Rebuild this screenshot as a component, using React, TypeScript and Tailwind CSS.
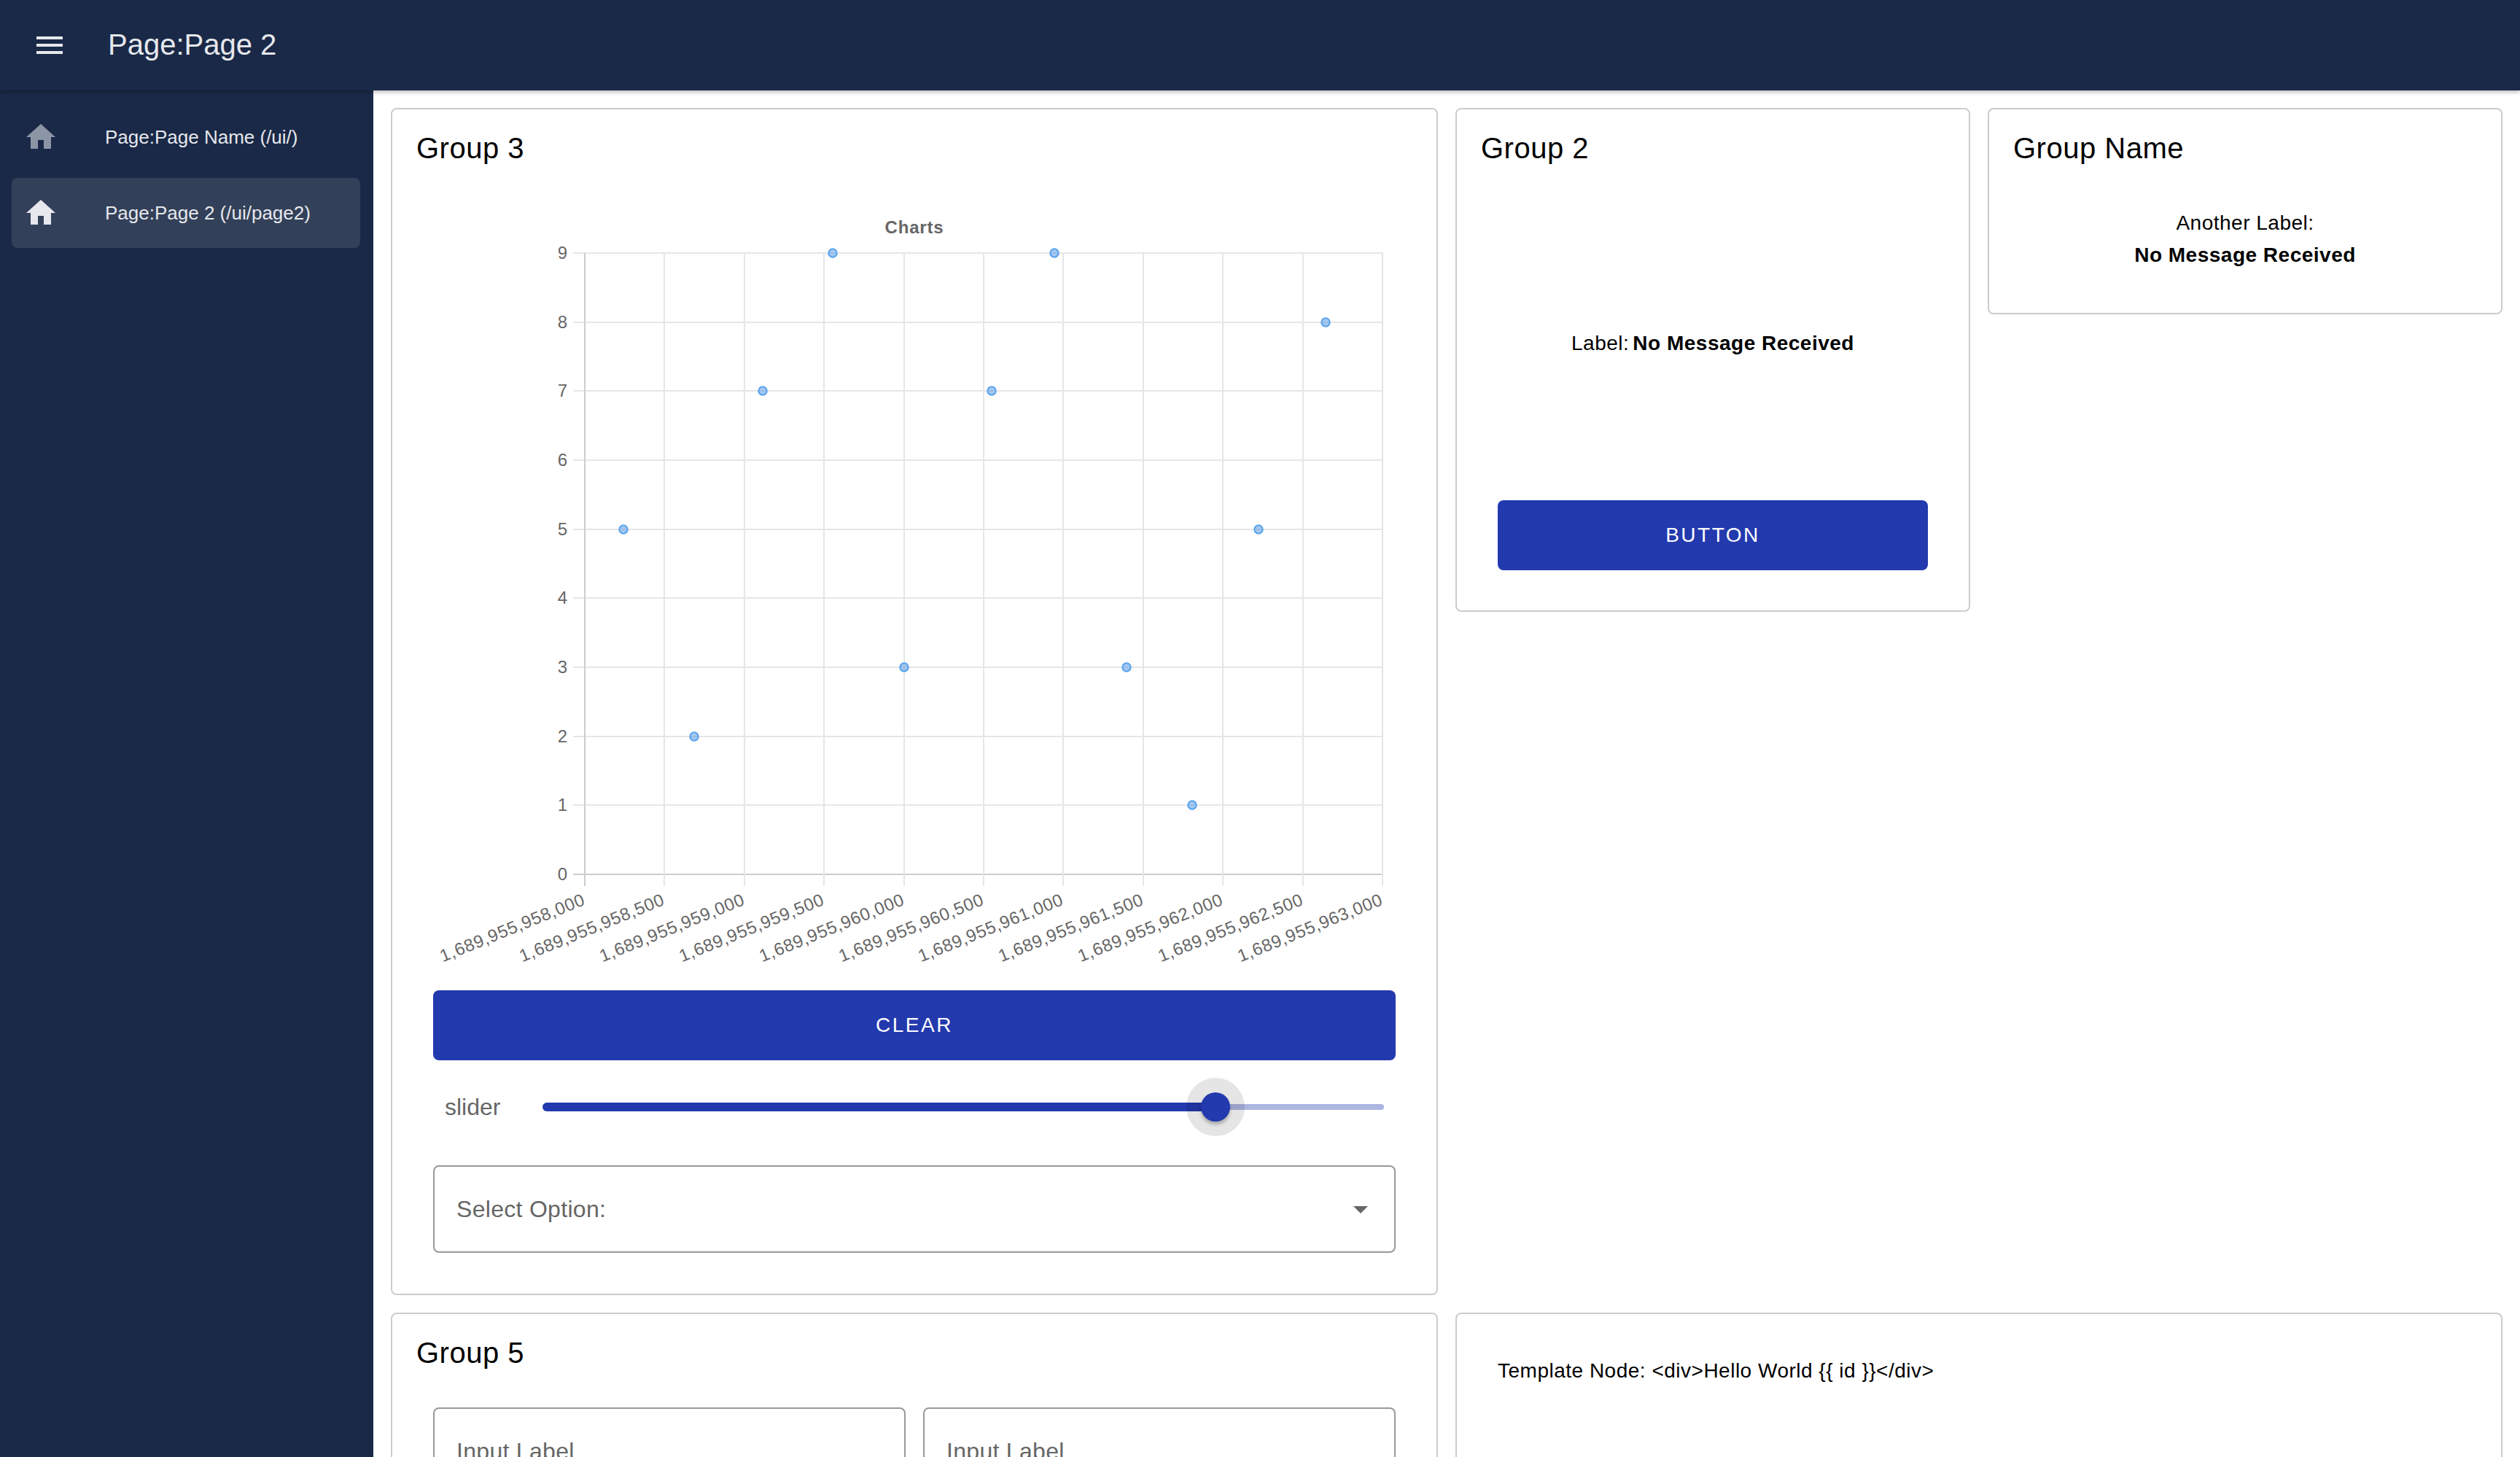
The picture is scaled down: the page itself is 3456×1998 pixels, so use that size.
import React from "react";

const FONT = "[font-family:'Liberation_Sans',Arial,sans-serif]";
const BLUE = "bg-[#2339ae]";

const points: [number, number][] = [
  [855, 5],
  [952, 2],
  [1046, 7],
  [1142, 9],
  [1240, 3],
  [1360, 7],
  [1446, 9],
  [1545, 3],
  [1635, 1],
  [1726, 5],
  [1818, 8],
];
const xTicks = [
  "1,689,955,958,000",
  "1,689,955,958,500",
  "1,689,955,959,000",
  "1,689,955,959,500",
  "1,689,955,960,000",
  "1,689,955,960,500",
  "1,689,955,961,000",
  "1,689,955,961,500",
  "1,689,955,962,000",
  "1,689,955,962,500",
  "1,689,955,963,000",
];
const yTicks = [0, 1, 2, 3, 4, 5, 6, 7, 8, 9];

const xAt = (i: number) => Math.round(802 + i * 109.4);
const yAt = (v: number) => Math.round(1199 - v * 94.67);

function HomeIcon({ className }: { className: string }) {
  return (
    <svg viewBox="0 0 24 24" className={"h-12 w-12 shrink-0 " + className}>
      <path fill="currentColor" d="M10,20V14H14V20H19V12H22L12,3L2,12H5V20H10Z" />
    </svg>
  );
}

function NavItem({ label, active }: { label: string; active?: boolean }) {
  return (
    <div
      className={
        (active ? "bg-[#334059] " : "") +
        "flex h-24 items-center rounded-lg pl-4 text-[26px] text-[#e6e8ed]"
      }
    >
      <HomeIcon className={active ? "text-[#e6e8ed]" : "text-[#8c95a5]"} />
      <span className="ml-[64px] whitespace-nowrap">{label}</span>
    </div>
  );
}

function Card({
  title,
  className,
  children,
}: {
  title?: string;
  className?: string;
  children: React.ReactNode;
}) {
  return (
    <div className={"rounded-lg border-2 border-[#cccccc] bg-white " + (className ?? "")}>
      {title && (
        <div className="pl-[33px] pt-[29px] text-[40px] leading-[48px] tracking-[0.5px] text-black">
          {title}
        </div>
      )}
      {children}
    </div>
  );
}

function Chart() {
  return (
    <svg viewBox="594 250 1320 1084" className="block h-[1084px] w-[1320px]">
      <text
        x="1254"
        y="320"
        textAnchor="middle"
        fontSize="24"
        fontWeight="700"
        letterSpacing="0.8"
        fill="#666666"
      >
        Charts
      </text>
      {yTicks.map((v) => (
        <g key={v}>
          <line
            x1="786"
            x2="1897"
            y1={yAt(v)}
            y2={yAt(v)}
            stroke={v === 0 ? "#cccccc" : "#e6e6e6"}
            strokeWidth="2"
          />
          <text x="778" y={yAt(v) + 8} textAnchor="end" fontSize="24" fill="#666666">
            {v}
          </text>
        </g>
      ))}
      {xTicks.map((t, i) => (
        <g key={t}>
          <line
            x1={xAt(i)}
            x2={xAt(i)}
            y1="347"
            y2="1215"
            stroke={i === 0 ? "#cccccc" : "#e6e6e6"}
            strokeWidth="2"
          />
          <text
            x={xAt(i) + 2}
            y="1240"
            textAnchor="end"
            fontSize="24"
            letterSpacing="0.7"
            fill="#666666"
            transform={`rotate(-22 ${xAt(i) + 2} 1240)`}
          >
            {t}
          </text>
        </g>
      ))}
      {points.map(([x, v]) => (
        <circle
          key={x}
          cx={x}
          cy={yAt(v)}
          r="5.7"
          fill="rgba(90,155,230,0.55)"
          stroke="#56a2ee"
          strokeWidth="2"
        />
      ))}
    </svg>
  );
}

function Slider() {
  return (
    <div className="mt-6 flex h-20 items-center pl-4 pr-4">
      <span className="w-[134px] shrink-0 text-[32px] text-[#666666]">slider</span>
      <div className="relative flex flex-1 items-center">
        <div className="h-3 w-[923px] rounded-l-md bg-[#2339ae]" />
        <div className="h-2 flex-1 rounded-r-md bg-[#adb5e1]" />
        <div className="absolute left-[883px] top-[-34px] h-20 w-20 rounded-full bg-black/10" />
        <div className="absolute left-[903px] top-[-14px] h-10 w-10 rounded-full bg-[#2339ae] shadow-[0_4px_4px_rgba(0,0,0,0.25)]" />
      </div>
    </div>
  );
}

function Field({ label, arrow, className }: { label: string; arrow?: boolean; className?: string }) {
  return (
    <div
      className={
        "flex h-[120px] items-center justify-between rounded-lg border-2 border-[#999999] pl-[30px] pr-[22px] text-[32px] tracking-[0.3px] text-[#666666] " +
        (className ?? "")
      }
    >
      <span>{label}</span>
      {arrow && (
        <svg viewBox="0 0 24 24" className="h-12 w-12">
          <path fill="#666666" d="M7,10L12,15L17,10H7Z" />
        </svg>
      )}
    </div>
  );
}

function BlueButton({ label, className }: { label: string; className?: string }) {
  return (
    <div
      className={
        BLUE +
        " flex h-24 items-center justify-center rounded-lg text-[28px] tracking-[2.5px] text-white " +
        (className ?? "")
      }
    >
      {label}
    </div>
  );
}

export default function App() {
  return (
    <div className={FONT + " flex h-screen flex-col overflow-hidden bg-white"}>
      <header className="z-10 flex h-[124px] shrink-0 items-center bg-[#1a2947] pl-[44px] text-[#e6e8ed] shadow-[0_2px_6px_rgba(0,0,0,0.3)]">
        <svg viewBox="0 0 24 24" className="h-12 w-12">
          <path fill="currentColor" d="M3,6H21V8H3V6M3,11H21V13H3V11M3,16H21V18H3V16Z" />
        </svg>
        <div className="mb-[3px] ml-[56px] text-[40px]">Page:Page 2</div>
      </header>
      <div className="flex min-h-0 flex-1">
        <nav className="flex w-[512px] shrink-0 flex-col gap-2 bg-[#1a2947] pl-4 pr-[18px] pt-4">
          <NavItem label="Page:Page Name (/ui/)" />
          <NavItem label="Page:Page 2 (/ui/page2)" active />
        </nav>
        <main className="grid flex-1 grid-cols-12 content-start items-start gap-x-6 gap-y-6 px-6 pt-6">
          <Card title="Group 3" className="col-span-6 h-[1628px]">
            <div className="px-[56px] pt-[23px]">
              <Chart />
              <BlueButton label="CLEAR" className="mt-6" />
              <Slider />
              <Field label="Select Option:" arrow className="mt-10" />
            </div>
          </Card>
          <Card title="Group 2" className="col-span-3 h-[691px]">
            <div className="flex h-[260px] items-end justify-center gap-[5px] text-[28px] leading-[32px] tracking-[0.5px] text-black">
              <span>Label:</span>
              <span className="font-bold">No Message Received</span>
            </div>
            <div className="mt-[199px] px-[56px]">
              <BlueButton label="BUTTON" />
            </div>
          </Card>
          <Card title="Group Name" className="col-span-3 h-[283px]">
            <div className="mt-[57px] text-center text-[28px] leading-[44px] tracking-[0.5px] text-black">
              <div>Another Label:</div>
              <div className="font-bold">No Message Received</div>
            </div>
          </Card>
          <Card title="Group 5" className="col-span-6 h-[400px]">
            <div className="mt-[51px] grid grid-cols-2 gap-6 px-[56px]">
              <Field label="Input Label" />
              <Field label="Input Label" />
            </div>
          </Card>
          <Card className="col-span-6 h-[400px]">
            <div className="pl-[56px] pt-[58px] text-[28px] leading-[40px] tracking-[0.5px] text-black">
              {"Template Node: <div>Hello World {{ id }}</div>"}
            </div>
          </Card>
        </main>
      </div>
    </div>
  );
}
